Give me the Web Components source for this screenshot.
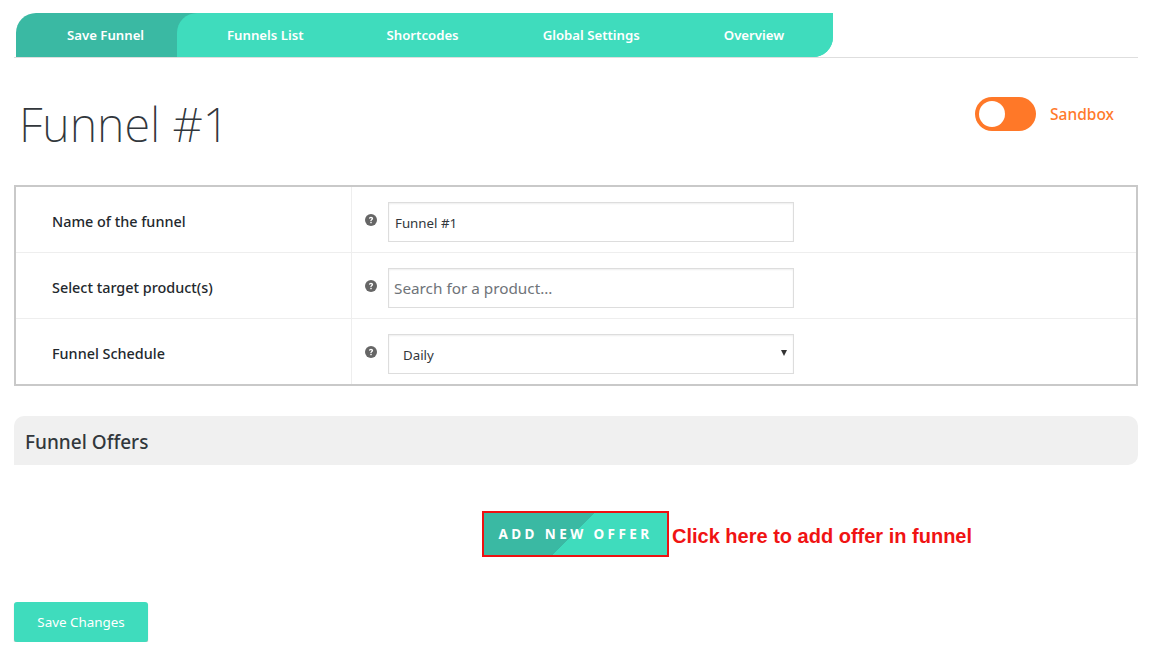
<!DOCTYPE html>
<html>
<head>
<meta charset="utf-8">
<title>Funnel</title>
<style>
  html, body { margin: 0; background: #fff; }
  body { font-family: "Noto Sans", "Open Sans", sans-serif; color: #23282d; }
</style>
</head>
<body>
<funnel-page>
  <funnel-tabs></funnel-tabs>
  <funnel-header title="Funnel #1"></funnel-header>
  <funnel-form>
    <form-row label="Name of the funnel"><field-box>Funnel #1</field-box></form-row>
    <form-row label="Select target product(s)"><field-box kind="search">Search for a product...</field-box></form-row>
    <form-row label="Funnel Schedule"><field-box kind="select">Daily</field-box></form-row>
  </funnel-form>
  <offers-bar>Funnel Offers</offers-bar>
  <add-offer></add-offer>
  <save-button>Save Changes</save-button>
</funnel-page>

<script>
const define = (tag, css, html) => {
  customElements.define(tag, class extends HTMLElement {
    constructor() {
      super();
      this.attachShadow({ mode: 'open' });
      const body = typeof html === 'function' ? html(this) : html;
      this.shadowRoot.innerHTML = `<style>${css}</style>${body}`;
    }
  });
};

define('funnel-page', `
  :host { display: block; width: 1124px; padding: 13px 18px 0 14px; }
`, `<slot></slot>`);

const tabs = ['Funnels List', 'Shortcodes', 'Global Settings', 'Overview'];
define('funnel-tabs', `
  :host { display: block; border-bottom: 1px solid #dedede; height: 44px; padding-left: 2px; }
  .bar { display: flex; width: 817px; height: 44px; background: linear-gradient(90deg, #3ab9a3 200px, #3fdcbd 200px); border-radius: 20px 0 20px 0; overflow: hidden; }
  .active { width: 161px; padding-left: 51px; box-sizing: border-box; }
  .rest { display: flex; flex: 1; background: #3fdcbd; border-radius: 20px 0 0 0; padding-left: 50px; gap: 83px; }
  .rest span:nth-child(n+2) { margin-right: 1px; }
  span { font-size: 13.2px; font-weight: 600; color: #fff; line-height: 44px; white-space: nowrap; }
`, `<div class="bar">
     <div class="active"><span>Save Funnel</span></div>
     <div class="rest">${tabs.map(t => `<span>${t}</span>`).join('')}</div>
   </div>`);

define('funnel-header', `
  :host { display: flex; justify-content: space-between; height: 127px; }
  h1 { margin: 0; padding: 34px 0 0 5px; font-size: 47px; font-weight: 200; line-height: 64px; color: #32373c; }
  .sandbox { display: flex; align-items: center; gap: 14px; height: 34px; margin: 39px 24px 0 0; color: #ff7a2b; font-size: 15.5px; font-weight: 500; }
  .toggle { width: 61px; height: 34px; border-radius: 17px; background: #ff7828; display: block; position: relative; }
  .toggle::after { content: ''; position: absolute; left: 4px; top: 4px; width: 26px; height: 26px; border-radius: 50%; background: #fff; }
`, el => `<h1>${el.getAttribute('title')}</h1>
  <div class="sandbox"><span class="toggle"></span><span>Sandbox</span></div>`);

define('funnel-form', `
  :host { display: block; border: 2px solid #c9c9c9; }
`, `<slot></slot>`);

const helpIcon = `<svg width="12" height="12" viewBox="0 0 12 12"><circle cx="6" cy="6" r="6" fill="#666"/><path d="M3.9 4.6c.1-1.2 1-1.9 2.1-1.9 1.2 0 2.1.8 2.1 1.8 0 .8-.5 1.2-1 1.6-.4.3-.5.5-.5.9H5.3c0-.8.2-1.2.7-1.6.4-.3.6-.5.6-.8 0-.3-.3-.6-.7-.6s-.7.3-.8.8z" fill="#fff"/><rect x="5.3" y="7.8" width="1.4" height="1.4" fill="#fff"/></svg>`;

define('form-row', `
  :host { display: flex; height: 66px; box-sizing: border-box; border-bottom: 1px solid #eee; }
  :host(:last-child) { border-bottom: 0; height: 65px; }
  .label { width: 336px; box-sizing: border-box; padding: 4px 0 0 36px; border-right: 1px solid #eee; display: flex; align-items: center; font-size: 14.4px; font-weight: 500; color: #23282d; }
  .field { display: flex; padding: 15px 0 0 13px; gap: 11px; }
  .help { height: 12px; margin-top: 12px; }
  svg { display: block; }
`, el => `<div class="label">${el.getAttribute('label')}</div>
  <div class="field"><div class="help">${helpIcon}</div><slot></slot></div>`);

define('field-box', `
  :host { display: flex; align-items: center; box-sizing: border-box; width: 406px; height: 40px; border: 1px solid #ddd; box-shadow: inset 0 1px 2px rgba(0,0,0,.07); background: #fff; padding: 1px 6px 0; font-size: 13.3px; color: #32373c; position: relative; }
  :host([kind="search"]) { font-size: 15.3px; color: #6f7479; padding: 0 5px; }
  :host([kind="select"]) { padding-left: 14px; }
  .arrow { position: absolute; right: 6px; top: 15px; width: 0; height: 0; border-left: 3px solid transparent; border-right: 3px solid transparent; border-top: 6px solid #333; }
`, el => `<slot></slot>${el.getAttribute('kind') === 'select' ? '<span class="arrow"></span>' : ''}`);

define('offers-bar', `
  :host { display: block; box-sizing: border-box; height: 49px; margin-top: 30px; background: #f0f0f0; border-radius: 10px 10px 10px 0; padding-left: 11px; font-size: 19px; font-weight: 500; line-height: 52px; color: #32373c; }
`, `<slot></slot>`);

define('add-offer', `
  :host { display: flex; align-items: center; gap: 3px; margin: 46px 0 0 468px; height: 46px; }
  .btn { box-sizing: border-box; width: 187px; height: 46px; border: 2px solid #ee1111; background: linear-gradient(135deg, #3ab9a3 0, #3ab9a3 49%, #3fdcbd 49%, #3fdcbd 100%); color: #fff; font-size: 13.5px; font-weight: 700; letter-spacing: 3.4px; line-height: 42px; text-align: center; white-space: nowrap; }
  .note { font-family: "Liberation Sans", Arial, sans-serif; font-weight: 700; font-size: 20px; color: #f01313; white-space: nowrap; padding-top: 4px; }
`, `<div class="btn">ADD NEW OFFER</div><div class="note">Click here to add offer in funnel</div>`);

define('save-button', `
  :host { display: block; width: 134px; height: 40px; margin-top: 45px; background: #3fdcbd; border-radius: 3px; box-shadow: 0 1px 1px rgba(0,0,0,.25); color: #fff; font-size: 13.4px; line-height: 40px; text-align: center; }
`, `<slot></slot>`);
</script>
</body>
</html>
